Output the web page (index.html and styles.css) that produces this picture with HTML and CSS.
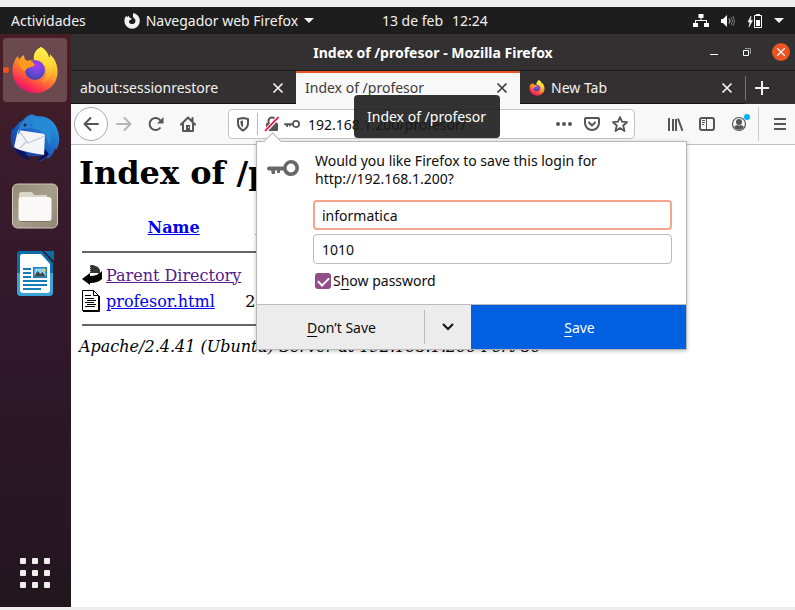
FILE: index.html
```html
<!DOCTYPE html>
<html lang="es">
<head>
<meta charset="utf-8">
<title>Index of /profesor - Mozilla Firefox</title>
<link rel="stylesheet" href="styles.css">
</head>
<body>
<svg class="defs" aria-hidden="true">
  <defs>
    <linearGradient id="flame" x1=".8" y1=".1" x2=".3" y2="1">
      <stop offset="0" stop-color="#fff04a"/><stop offset=".35" stop-color="#ffb22a"/><stop offset=".62" stop-color="#ff6a34"/><stop offset=".85" stop-color="#fb2957"/><stop offset="1" stop-color="#d7127f"/>
    </linearGradient>
    <linearGradient id="tail" x1="0" y1="0" x2="0" y2="1">
      <stop offset="0" stop-color="#fff44f"/><stop offset=".5" stop-color="#ffd536"/><stop offset="1" stop-color="#ff8a24" stop-opacity=".1"/>
    </linearGradient>
    <radialGradient id="globe" cx=".6" cy=".25" r=".8">
      <stop offset="0" stop-color="#a63cf0"/><stop offset=".55" stop-color="#6a48d8"/><stop offset="1" stop-color="#3f3fa6"/>
    </radialGradient>
    <linearGradient id="bird" x1="1" y1="0" x2="0" y2="1">
      <stop offset="0" stop-color="#2fa3e6"/><stop offset=".5" stop-color="#1b62c4"/><stop offset="1" stop-color="#1a2f8c"/>
    </linearGradient>
    <linearGradient id="olive" x1="0" y1="0" x2="1" y2="1">
      <stop offset="0" stop-color="#948a76"/><stop offset=".5" stop-color="#a79f8b"/><stop offset="1" stop-color="#8f8672"/>
    </linearGradient>
    <symbol id="firefox" viewBox="0 0 46 48">
      <path fill="url(#flame)" d="M29 1c4 2 7 6 8 10l1 0c0-1 0-2-.2-3C43 13 46 19 45.500 27 45 39 35 47 23 47S0 37 .5 24C.7 18 3 13 6 10l1 4c1-2 3-4 5-5 0 3 1 5 3 6 3-1 6-1 7 0 0-6 2-11 7-14z"/>
      <circle cx="23" cy="24" r="10" fill="url(#globe)"/>
      <path fill="url(#tail)" d="M29 1c-6 3-8 8-7 13 7-1 13 5 12 13-.6 4-3 8-6 10 10-2 15-10 13-19-1-3-2-5-4-6C36 7 33 4 29 1z"/>
      <path fill="#ff9a1f" d="M7 14c3-2 6-1 8 1 3-1 6 0 8 4-2 2-5 2-7 3-2 0-1 3-4 3-3-2-5-6-5-11z"/>
      <path fill="none" stroke="#fff04a" stroke-opacity=".4" stroke-width="1" d="M31 14c6 4 7 15 0 21M36 15c5 8 2 18-5 22"/>
    </symbol>
    <symbol id="firefox-mono" viewBox="0 0 16 16">
      <path fill="currentColor" fill-rule="evenodd" d="M9.500 0c4 1.200 6.300 4.100 6.300 8A7.700 7.700 0 0 1 .4 8C.4 5.800 1.200 4 2.400 2.800l.5 1.400 1.900-1.400c0 1 .5 1.700 1.400 2.100l1.700.8-1.300 1.200c-1.100 0-1.800.8-1.600 2 .4 1.500 1.800 2.300 3.500 2.100 2-.3 3.100-1.700 2.900-3.600-.1-1.300-.8-2.100-1.700-2.500C8.600 3.400 8.700 1.600 9.500 0z"/>
    </symbol>
    <symbol id="close" viewBox="0 0 12 12"><path d="M1.500 1.500l9 9m0-9l-9 9" fill="none" stroke="currentColor" stroke-width="1.700"/></symbol>
    <symbol id="key" viewBox="0 0 32 16">
      <path fill="currentColor" fill-rule="evenodd" d="M24 0a8 8 0 0 1 0 16 8 8 0 0 1-7.700-5.500H13V13h-3v-2.500H8V14H5l-1-3.500H2a2 2 0 0 1 0-4h14.300A8 8 0 0 1 24 0zm0 3.600a4.400 4.400 0 1 0 0 8.800 4.400 4.400 0 0 0 0-8.800z"/>
    </symbol>
  </defs>
</svg>

<div class="desktop">
  <header class="panel">
    <button class="panel-item activities">Actividades</button>
    <button class="panel-item app-menu">
      <svg width="16" height="16"><use href="#firefox-mono"/></svg>
      <span>Navegador web Firefox</span>
      <i class="caret"></i>
    </button>
    <button class="panel-item clock"><span>13 de feb</span><span>12:24</span></button>
    <button class="panel-item status" aria-label="Sistema">
      <svg width="16" height="14" viewBox="0 0 16 14"><g fill="#fff"><path d="M5.500 0h5v4h-5zM0 9h5v4H0zM11 9h5v4h-5z"/><path d="M7.500 3h1v3h5.500v4h-1V7H3v3H2V6h5.500z"/></g></svg>
      <svg width="16" height="14" viewBox="0 0 16 14"><path fill="#fff" d="M1 5h2l4-4v12L3 9H1z"/><path d="M9 4.500q2 2.500 0 5" fill="none" stroke="#ccc"/><path d="M11 3q3 4 0 8M13 2q3 5 0 10" fill="none" stroke="#777"/></svg>
      <svg width="16" height="16" viewBox="0 0 16 16"><path fill="#fff" d="M4 3L1 9h2l-1 5 3.500-6.500h-2z" stroke="#fff" stroke-width=".5"/><path fill="none" stroke="#fff" d="M7.500 2.500h7v12h-7zM9 1.500h4"/><path fill="#fff" d="M9 7h4v6H9z"/></svg>
      <i class="caret"></i>
    </button>
  </header>

  <div class="workspace">
    <nav class="dock" aria-label="Aplicaciones">
      <button class="dock-item running" aria-label="Firefox">
        <svg width="46" height="48"><use href="#firefox"/></svg>
      </button>
      <button class="dock-item" aria-label="Thunderbird">
        <svg width="50" height="50" viewBox="0 0 50 50">
          <path fill="url(#bird)" d="M13 7c4-5 9-7 13-4C39 2 48 11 49 23c1 6-1 11-3 14l-1-2c-1 5-4 9-8 11l0-2c-2 2-5 4-8 4l5-6C20 45 6 42 3 35 0 29 0 21 3 14l0 4c2-5 6-9 10-11z"/>
          <path fill="#10135f" d="M3 33c3 8 9 12 17 14l-5-8zM26 48c4-2 8-7 9-12l4 5c-3 4-8 7-13 7z"/>
          <path fill="#f3f5f8" d="M8 17l27 4-1 21C23 40 9 38 4 34z"/>
          <path d="M9 18l9 12 17-7M10 35l7-7" fill="none" stroke="#c4c9d3" stroke-width="1.300"/>
          <path fill="#2c80d2" d="M12 10c5-7 11-8 14-6-4 5-7 8-5 11l-10 1-3 6c0-5 1-9 4-12z"/>
          <path fill="#2589d5" d="M24 5c12 0 20 8 21 18l-4-6c1 7 0 12-2 16-1-10-7-17-18-18z"/>
          <circle cx="15" cy="12" r="1.500" fill="#16294f"/>
        </svg>
      </button>
      <button class="dock-item" aria-label="Archivos">
        <svg width="46" height="46" viewBox="0 0 46 46">
          <rect x=".5" y="1" width="45" height="44" rx="5" fill="url(#olive)" stroke="#d2cbb9"/>
          <path fill="#dcd6c9" d="M7 24V12q0-3 3-3h9q2 0 3 3h13v13z"/>
          <rect x="6.500" y="14" width="33" height="24" rx="3" fill="#faf9f7"/>
          <path d="M9 38.500h28" stroke="#7c735f"/>
        </svg>
      </button>
      <button class="dock-item" aria-label="LibreOffice Writer">
        <svg width="38" height="46" viewBox="0 0 38 46">
          <path fill="#086fab" d="M4 0h22l11 12v29q0 4-4 4H5q-4 0-4-4V4q0-4 3-4z"/>
          <path fill="#3aa3d8" d="M1 22h36v19q0 4-4 4H5q-4 0-4-4z"/>
          <path fill="#fff" d="M6 3h19l9 10v26q0 3-3 3H7q-3 0-3-3V6q0-3 2-3z"/>
          <path fill="#086fab" d="M28 0h10v10z"/>
          <path d="M7 18h8M7 22h8M7 26h8M7 30h24M7 34h24M7 38h18" stroke="#137db9" stroke-width="2"/>
          <rect x="17" y="16" width="14" height="11" fill="#1681be"/><rect x="18.500" y="17.500" width="11" height="8" fill="#8cd3f3"/>
          <path fill="#444" d="M18.500 25l3-5 3 3 2-2 3 4.500h-11z"/><circle cx="28" cy="19" r="1.500" fill="#ffc927"/>
        </svg>
      </button>
      <button class="dock-item show-apps" aria-label="Mostrar aplicaciones">
        <svg width="30" height="30" viewBox="0 0 30 30" fill="#f0efeb"><rect width="6" height="6" rx="1"/><rect x="12" width="6" height="6" rx="1"/><rect x="24" width="6" height="6" rx="1"/><rect y="12" width="6" height="6" rx="1"/><rect x="12" y="12" width="6" height="6" rx="1"/><rect x="24" y="12" width="6" height="6" rx="1"/><rect y="24" width="6" height="6" rx="1"/><rect x="12" y="24" width="6" height="6" rx="1"/><rect x="24" y="24" width="6" height="6" rx="1"/></svg>
      </button>
    </nav>

    <section class="window">
      <div class="titlebar">
        <span class="window-title">Index of /profesor - Mozilla Firefox</span>
        <div class="window-buttons">
          <button aria-label="Minimizar"><svg width="8" height="8" viewBox="0 0 8 8"><path d="M0 6.500h8" stroke="#fff"/></svg></button>
          <button aria-label="Restaurar"><svg width="8" height="8" viewBox="0 0 8 8" fill="none"><path d="M2 .5h5.500V6" stroke="#999"/><path d="M.5 2.500h5v5h-5z" stroke="#fff"/></svg></button>
          <button class="window-close" aria-label="Cerrar"><svg width="10" height="10" viewBox="0 0 12 12"><path d="M1.500 1.500l9 9m0-9l-9 9" stroke="#fff" stroke-width="1.500"/></svg></button>
        </div>
      </div>

      <div class="tabs">
        <div class="tab"><span class="tab-label">about:sessionrestore</span><button class="tab-close" aria-label="Close tab"><svg width="12" height="12"><use href="#close"/></svg></button></div>
        <div class="tab active"><span class="tab-label">Index of /profesor</span><button class="tab-close" aria-label="Close tab"><svg width="12" height="12"><use href="#close"/></svg></button><div class="tooltip" role="tooltip">Index of /profesor</div></div>
        <div class="tab"><svg width="16" height="16"><use href="#firefox"/></svg><span class="tab-label">New Tab</span><button class="tab-close" aria-label="Close tab"><svg width="12" height="12"><use href="#close"/></svg></button></div>
        <button class="new-tab" aria-label="New tab"><svg width="14" height="14" viewBox="0 0 14 14"><path d="M7 0v14M0 7h14" stroke="#eee" stroke-width="2"/></svg></button>
      </div>

      <div class="toolbar">
        <div class="nav-buttons">
          <button class="back" aria-label="Back"><svg width="16" height="16" viewBox="0 0 16 16"><path d="M15 8H2M7.500 2L1.500 8l6 6" fill="none" stroke="currentColor" stroke-width="2" stroke-linecap="round" stroke-linejoin="round"/></svg></button>
          <button class="forward" aria-label="Forward"><svg width="16" height="16" viewBox="0 0 16 16"><path d="M1 8h13M8.500 2l6 6-6 6" fill="none" stroke="currentColor" stroke-width="2" stroke-linecap="round" stroke-linejoin="round"/></svg></button>
          <button aria-label="Reload"><svg width="16" height="16" viewBox="0 0 16 16"><path d="M12.500 11.500A6 6 0 1 1 12.500 4.500" fill="none" stroke="currentColor" stroke-width="2"/><path fill="currentColor" d="M15.500 1v6.500H9z"/></svg></button>
          <button aria-label="Home"><svg width="16" height="16" viewBox="0 0 16 16"><path d="M1 8.500L8 1.500l7 7M3 7.500V15h10V7.500M12.500 2v4" fill="none" stroke="currentColor" stroke-width="2" stroke-linejoin="round" stroke-linecap="round"/><path fill="currentColor" d="M6 9h4v6H6z"/><path fill="#fff" d="M8 11h1v1H8z"/></svg></button>
        </div>

        <div class="urlbar">
          <button class="shield" aria-label="Tracking protection"><svg width="16" height="16" viewBox="0 0 16 16"><path d="M8 2l5 1v4c0 3.500-2 6-5 7.500C5 13 3 10.500 3 7V3z" fill="none" stroke="currentColor" stroke-width="2" stroke-linejoin="round"/><path fill="currentColor" d="M8 4.500v7Q5.500 10 5.500 7V5z"/></svg></button>
          <button class="lock" aria-label="Site information"><svg width="16" height="16" viewBox="0 0 16 16"><path d="M4.500 8V5a3.500 3.500 0 0 1 7 0v3" fill="none" stroke="currentColor" stroke-width="2"/><rect x="2" y="7" width="12" height="8" rx="1" fill="currentColor"/><path d="M1 15.500L14.500 1" stroke="#fff" stroke-width="4"/><path d="M1 15L14.500 1" stroke="#ff0039" stroke-width="1.800"/></svg></button>
          <button aria-label="Saved login"><svg width="16" height="8"><use href="#key"/></svg></button>
          <input class="address" type="text" aria-label="Address" value="192.168.1.200/profesor/">
          <button aria-label="Page actions"><svg width="16" height="16" viewBox="0 0 16 16" fill="currentColor"><circle cx="2" cy="8" r="2"/><circle cx="8" cy="8" r="2"/><circle cx="14" cy="8" r="2"/></svg></button>
          <button aria-label="Pocket"><svg width="16" height="16" viewBox="0 0 16 16"><path d="M2 2h12q1 0 1 1v4a7 7 0 0 1-14 0V3q0-1 1-1zM5 6.500l3 3 3-3" fill="none" stroke="currentColor" stroke-width="2" stroke-linecap="round" stroke-linejoin="round"/></svg></button>
          <button aria-label="Bookmark"><svg width="16" height="16" viewBox="0 0 16 16"><path d="M8 1l2 4.700 5 .5-3.800 3.300L12.500 15 8 12l-4.500 3 1.300-5.500L1 6.200l5-.5z" fill="none" stroke="currentColor" stroke-width="1.800" stroke-linejoin="round"/></svg></button>

          <form class="doorhanger">
            <div class="prompt">
              <svg class="prompt-icon" width="32" height="16"><use href="#key"/></svg>
              <div class="prompt-body">
                <p>Would you like Firefox to save this login for http://192.168.1.200?</p>
                <input class="field focused" type="text" aria-label="Username" value="informatica">
                <input class="field" type="text" aria-label="Password" value="1010">
                <label class="show"><input type="checkbox" checked><span>S<u>h</u>ow password</span></label>
              </div>
            </div>
            <div class="actions">
              <button type="button" class="dont"><span><u>D</u>on’t Save</span></button>
              <button type="button" class="more" aria-label="More options"><svg width="14" height="10" viewBox="0 0 14 10"><path d="M2 2l5 5 5-5" fill="none" stroke="#111" stroke-width="2"/></svg></button>
              <button type="button" class="save"><span><u>S</u>ave</span></button>
            </div>
          </form>
        </div>

        <div class="tool-buttons">
          <button aria-label="Library"><svg width="16" height="16" viewBox="0 0 16 16"><path d="M2 2v13M6 3v12M9 3v12M11 2.500l4.500 12.500" stroke="currentColor" stroke-width="2"/></svg></button>
          <button aria-label="Sidebars"><svg width="16" height="16" viewBox="0 0 16 16"><rect x="1" y="2" width="14" height="12" rx="2" fill="none" stroke="currentColor" stroke-width="2"/><path d="M7.500 2v12" stroke="currentColor"/><path d="M3 4.500h3M3 6.500h3M3 8.500h2" stroke="currentColor"/></svg></button>
          <button class="account" aria-label="Account"><svg width="16" height="16" viewBox="0 0 16 16"><circle cx="8" cy="8" r="6.500" fill="none" stroke="currentColor" stroke-width="1.200"/><circle cx="8" cy="6" r="3" fill="currentColor"/><path fill="currentColor" d="M3 11q2-2 3-2 2 1 4 0 1 0 3 2a6 6 0 0 1-10 0z"/></svg><i class="badge"></i></button>
        </div>
        <button class="menu" aria-label="Menu"><svg width="14" height="14" viewBox="0 0 14 14"><path d="M1 2h12M1 7h12M1 12h12" stroke="currentColor" stroke-width="2"/></svg></button>
      </div>

      <main class="page">
        <h1>Index of /profesor</h1>
        <table>
          <thead>
            <tr class="head"><th></th><th><a href="#">Name</a></th><th><a href="#">Last modified</a></th></tr>
            <tr><th colspan="3"><hr></th></tr>
          </thead>
          <tbody>
            <tr>
              <td><svg width="20" height="22" viewBox="0 0 20 22"><path fill="#333" d="M8 1h3l5 2 2 3v4l-3-1H8z"/><path d="M8.500 1v8" stroke="#999" stroke-dasharray="1 1"/><path fill="#000" d="M0 15l8-6v3q8 0 12-5v8q-4 4-12 4v2z"/></svg></td>
              <td><a class="visited" href="#">Parent Directory</a></td><td></td>
            </tr>
            <tr>
              <td><svg width="20" height="22" viewBox="0 0 20 22"><path d="M.5.500h11l5 5v15H.5z" fill="#fff" stroke="#000"/><path d="M11.500.500v5h5M17.500 6v15.500H1" fill="none" stroke="#000"/><path d="M3 5.500h6M3 8.500h9M5 10.500h9M3 12.500h9M5 14.500h9M3 16.500h10" stroke="#000"/></svg></td>
              <td><a href="#">profesor.html</a></td><td>2021-02-13 12:22</td>
            </tr>
            <tr><th colspan="3"><hr></th></tr>
          </tbody>
        </table>
        <address>Apache/2.4.41 (Ubuntu) Server at 192.168.1.200 Port 80</address>
      </main>
    </section>
  </div>
</div>
</body>
</html>
```

FILE: styles.css
```css
* { box-sizing: border-box; }

body {
  margin: 0;
  background: #eee;
  font-family: "Noto Sans", "Open Sans", sans-serif;
  font-size: 14px;
  line-height: 18px;
  color: #0c0c0d;
}

button {
  display: flex;
  align-items: center;
  justify-content: center;
  margin: 0;
  padding: 0;
  border: 0;
  background: none;
  color: inherit;
  font: inherit;
}

input { font: inherit; color: inherit; }
svg { display: block; flex: none; }
.defs { position: absolute; width: 0; height: 0; }

.desktop {
  display: flex;
  flex-direction: column;
  min-height: 100vh;
  padding: 7px 0 3px;
}

/* Top panel */
.panel {
  display: grid;
  grid-template-columns: auto 1fr auto 1fr;
  align-items: center;
  height: 27px;
  padding: 0 11px;
  background: #1d1d1d;
  color: #f2f2f2;
}
.app-menu { gap: 6px; justify-self: start; margin-left: 38px; }
.clock { gap: 9px; }
.status { gap: 11px; justify-self: end; }
.caret {
  border: 5px solid transparent;
  border-top-color: currentColor;
  border-bottom: 0;
}

.workspace { display: flex; flex: 1; }

/* Dock */
.dock {
  display: flex;
  flex-direction: column;
  gap: 4px;
  width: 71px;
  padding: 4px 3px 2px;
  background: linear-gradient(#4b1e26, #3b1c2b 20%, #32182b 50%, #251622 92%, #21161b);
}
.dock-item {
  position: relative;
  width: 64px;
  height: 64px;
  border-radius: 4px;
}
.running { background: #6b4a4f; }
.running::before {
  content: "";
  position: absolute;
  left: 0;
  width: 6px;
  height: 6px;
  border-radius: 50%;
  background: #e95420;
}
.show-apps { margin-top: auto; }

/* Window frame */
.window {
  display: flex;
  flex: 1;
  flex-direction: column;
  min-width: 0;
  background: #fff;
}
.titlebar {
  display: grid;
  grid-template-columns: 1fr auto 1fr;
  align-items: center;
  height: 37px;
  padding: 0 5px;
  border-bottom: 1px solid #1b1a1b;
  background: #323031;
  color: #fff;
}
.window-title { grid-column: 2; padding-top: 1px; font-weight: bold; }
.window-buttons {
  display: flex;
  gap: 25px;
  align-items: center;
  justify-self: end;
}
.window-close {
  width: 18px;
  height: 18px;
  margin-left: -4px;
  border-radius: 50%;
  background: #e95420;
}

.tabs {
  display: flex;
  height: 33px;
  background: #323031;
  color: #f2f2f2;
}
.tab {
  position: relative;
  display: flex;
  flex: 0 1 225px;
  gap: 6px;
  align-items: center;
  padding: 2px 12px 0 9px;
  border-bottom: 1px solid #151515;
}
.tab-label { flex: 1; }
.tab.active {
  flex-basis: 224px;
  padding-top: 0;
  padding-bottom: 1px;
  border-top: 2px solid #e95420;
  border-bottom: 0;
  background: #f8f8f8;
  color: #3d3d3d;
}
.tooltip {
  position: absolute;
  z-index: 3;
  top: 22px;
  left: 58px;
  padding: 13px 14px 12px 13px;
  border-radius: 4px;
  background: rgba(28, 28, 28, .9);
  color: #fff;
  white-space: nowrap;
}
.new-tab {
  width: 32px;
  height: 24px;
  margin-top: 5px;
  border-left: 1px solid #777;
}

/* Navigation toolbar */
.toolbar {
  display: flex;
  align-items: center;
  height: 41px;
  padding: 0 8px 0 3px;
  border-bottom: 1px solid #bfbfbf;
  background: #f8f8f8;
  color: #555;
}
.nav-buttons { display: flex; gap: 16px; align-items: center; width: 154px; }
.back {
  width: 34px;
  height: 34px;
  margin-right: -8px;
  border: 1px solid #aaa;
  border-radius: 50%;
  background: #fff;
}
.forward { color: #b5b5b5; }
.urlbar {
  position: relative;
  display: flex;
  flex: 1;
  gap: 12px;
  align-items: center;
  min-width: 0;
  height: 30px;
  padding: 0 6px;
  border: 1px solid #c3c3c3;
  border-radius: 4px;
  background: #fff;
}
.shield {
  justify-content: flex-start;
  width: 23px;
  height: 22px;
  margin-right: -6px;
  border-right: 1px solid #bbb;
}
.lock { margin-right: -8px; }
.address {
  flex: 1;
  min-width: 0;
  margin-left: -6px;
  padding: 1px 2px 0;
  border: 0;
  outline: 0;
  background: none;
  color: #0c0c0d;
}
.tool-buttons {
  display: flex;
  gap: 16px;
  align-items: center;
  margin-left: 32px;
}
.account { position: relative; }
.badge {
  position: absolute;
  top: -2px;
  right: -3px;
  width: 6px;
  height: 6px;
  border-radius: 50%;
  background: #00b3f4;
}
.menu {
  width: 29px;
  height: 34px;
  margin-left: 11px;
  padding-left: 14px;
  border-left: 1px solid #ccc;
}

/* Save-login panel */
.doorhanger {
  position: absolute;
  z-index: 2;
  top: 31px;
  left: 27px;
  width: 431px;
  border: 1px solid #b8b8b8;
  background: #fff;
  box-shadow: 0 1px 4px rgba(0, 0, 0, .25);
  color: #0c0c0d;
}
.doorhanger::before {
  content: "";
  position: absolute;
  top: -7px;
  left: 9px;
  width: 12px;
  height: 12px;
  border: 1px solid #b8b8b8;
  border-width: 1px 0 0 1px;
  background: #fff;
  transform: rotate(45deg);
}
.prompt {
  display: flex;
  gap: 14px;
  padding: 10px 14px 14px 10px;
}
.prompt-icon { margin-top: 8px; color: #686868; }
.prompt-body { display: flex; flex: 1; flex-direction: column; gap: 4px; }
.prompt-body p { width: 300px; margin: 0 2px 8px; }
.field {
  width: 100%;
  height: 30px;
  padding: 0 8px;
  border: 1px solid #bbb;
  border-radius: 4px;
  outline: 0;
  background: #fff;
}
.focused { border: 2px solid #f4a68c; padding: 0 7px; }
.show {
  display: flex;
  gap: 2px;
  align-items: center;
  margin: 4px 2px 0;
}
.show input {
  appearance: none;
  width: 16px;
  height: 16px;
  margin: 0;
  border-radius: 3px;
  background: #924d8b;
}
.show input:checked::before {
  content: "";
  display: block;
  width: 9px;
  height: 5px;
  margin: 4px 3px;
  border: 2px solid #fff;
  border-width: 0 0 2px 2px;
  transform: rotate(-45deg);
}
u { text-underline-offset: 3px; }
.actions {
  display: flex;
  align-items: center;
  height: 45px;
  border-top: 1px solid #bbb;
  background: #ececec;
}
.dont { flex: 0 0 168px; height: 34px; border-right: 1px solid #bbb; }
.more { flex: 0 0 46px; height: 44px; }
.save { flex: 1; height: 44px; background: #0060df; color: #fff; }
.dont, .save { padding-top: 2px; padding-left: 2px; }

/* Directory listing */
.page {
  flex: 1;
  padding: 9px 8px 8px;
  font-family: "DejaVu Serif", serif;
  font-size: 16px;
  line-height: 19px;
  color: #000;
}
.page h1 { margin: 0 0 20px; font-size: 32px; line-height: 38px; }
.page table { border-spacing: 2px; }
.page th, .page td { padding: 1px; }
.page .head th { padding: 4px 1px 3px; }
.page td { height: 24px; }
.page td:first-child { width: 22px; }
.page hr {
  height: 2px;
  margin: 8px 0 7px;
  border: 0;
  background: #666;
}
.page a { color: #00e; }
.page a.visited { color: #551a8b; }
address { margin-top: 1px; font-style: italic; }
```
